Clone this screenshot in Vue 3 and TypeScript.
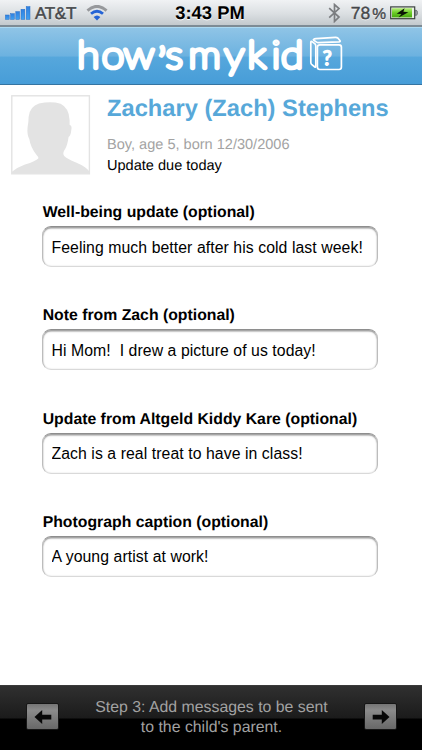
<script setup lang="ts">
import { ref } from 'vue'

interface Field {
  id: string
  label: string
  value: string
}

const fields = ref<Field[]>([
  { id: 'wellbeing', label: 'Well-being update (optional)', value: 'Feeling much better after his cold last week!' },
  { id: 'note', label: 'Note from Zach (optional)', value: 'Hi Mom!  I drew a picture of us today!' },
  { id: 'update', label: 'Update from Altgeld Kiddy Kare (optional)', value: 'Zach is a real treat to have in class!' },
  { id: 'caption', label: 'Photograph caption (optional)', value: 'A young artist at work!' },
])
</script>

<template>
  <div class="screen">
    <div class="status">
      <div class="side">
        <svg class="signal" width="26" height="14" viewBox="0 0 26 14">
          <defs>
            <linearGradient id="bar" x1="0" y1="0" x2="0" y2="1">
              <stop offset="0" stop-color="#2f7fe0" />
              <stop offset="1" stop-color="#3fa0f0" />
            </linearGradient>
          </defs>
          <g fill="url(#bar)" stroke="#2870c8" stroke-width=".5">
            <rect x=".4" y="9" width="3.8" height="4.4" />
            <rect x="5.6" y="7.7" width="3.8" height="5.7" />
            <rect x="10.8" y="5.6" width="3.8" height="7.8" />
            <rect x="16" y="3.3" width="3.8" height="10.1" />
            <rect x="21.2" y=".6" width="3.8" height="12.8" />
          </g>
        </svg>
        <span class="carrier">AT&amp;T</span>
        <svg class="wifi" width="22" height="16" viewBox="0 0 22 16">
          <path d="M1.5 5.6 Q11 -2.8 20.5 5.6" fill="none" stroke="#96989b" stroke-width="3" />
          <path d="M5 8.8 Q11 3.6 17 8.8" fill="none" stroke="#2463d6" stroke-width="2.8" />
          <path d="M7.6 12 Q11 9 14.4 12 L11 15.4 Z" fill="#2463d6" />
        </svg>
      </div>
      <span class="clock">3:43 PM</span>
      <div class="side right">
        <svg class="bluetooth" width="13" height="20" viewBox="0 0 13 20">
          <path d="M1.2 5.2 L11 14 L6.5 18.4 V1.6 L11 5.6 L1.2 14.6" fill="none" stroke="#7b7d80" stroke-width="1.7" />
        </svg>
        <span class="percent">78<i>%</i></span>
        <svg class="battery" width="28" height="14" viewBox="0 0 28 14">
          <defs>
            <linearGradient id="charge" x1="0" y1="0" x2="0" y2="1">
              <stop offset="0" stop-color="#b6ec7c" />
              <stop offset=".45" stop-color="#6fd02a" />
              <stop offset="1" stop-color="#46a80e" />
            </linearGradient>
          </defs>
          <rect x=".7" y=".9" width="24" height="11.8" fill="#e9f0e4" stroke="#3c4340" stroke-width="1.2" />
          <rect x="2" y="2.2" width="20" height="9.2" fill="url(#charge)" />
          <path d="M25.2 4.3 h1 q1.2 0 1.2 2.5 t-1.2 2.5 h-1 Z" fill="#a3a8ab" stroke="#4c5154" stroke-width=".7" />
          <path d="M14.6 2.2 L6.6 7.8 L11.4 8 L8.6 11.6 L18.4 6.2 L13.4 5.8 Z" fill="#0b1606" />
        </svg>
      </div>
    </div>

    <header class="header">
      <svg class="logo" width="270" height="56" viewBox="0 0 270 56">
        <g fill="#fff" stroke="#fff" stroke-linejoin="round" stroke-linecap="round">
          <text transform="scale(1.09 1)" x="0.3 22.6 43 74.4 81.4 102.4 135.2 156.4 178.6 187.2" y="41 41 41 48 41 41 41 41 41 41" class="word">how’smykid</text>
          <text x="245.8" y="38.2" class="mark">?</text>
          <g fill="none" stroke-width="1.7" transform="translate(2.4 1.2)">
            <rect x="238" y="16.7" width="24" height="24.6" rx="2.4" />
            <path d="M235.4 38.8 L232.2 36.2 Q231.4 35.4 231.4 34 V14.4 Q231.4 12.3 233 13.6 L235.6 15.7 Q236.4 16.5 236.4 18 V38 Q236.4 39.5 235.4 38.8Z" />
            <path d="M234.2 11.2 Q235 10.7 236.5 10.5 L256 9.1 Q257.4 9 258.4 9.8 L260.3 12 Q261.6 13.5 259.5 13.7 L239 14.4 Q237.8 14.4 236.8 13.7 L234.4 12 Q233.7 11.5 234.2 11.2Z" />
          </g>
        </g>
      </svg>
    </header>

    <main class="content">
      <section class="profile">
        <svg class="avatar" width="80" height="80" viewBox="0 0 80 80">
          <rect x=".8" y=".8" width="77.6" height="78" fill="#fff" stroke="#e3e3e3" stroke-width="1.4" />
          <path d="M1 78.5 V76.8 Q6 72.5 14 69.6 Q25 66 27.3 63.4 Q27.8 62 25.2 59.5 Q19.5 52 18.3 44 Q15.8 39.5 16.6 32 Q17.6 27 17.6 22 Q18.8 11.4 28 8.6 Q40 6 49.6 8.8 Q58 13 58.6 25 V29.7 Q61.3 30.5 60.3 35 Q59.8 40.5 57.6 42 Q56.4 50 54.4 53.6 Q51 58.5 53.2 61 Q56 64 65 67.4 Q74.5 71.4 78 76 V78.5Z" fill="#e3e3e3" />
        </svg>
        <div class="details">
          <h1>Zachary (Zach) Stephens</h1>
          <p class="meta">Boy, age 5, born 12/30/2006</p>
          <p>Update due today</p>
        </div>
      </section>

      <form class="fields" @submit.prevent>
        <div v-for="field in fields" :key="field.id" class="field">
          <label :for="field.id">{{ field.label }}</label>
          <input :id="field.id" v-model="field.value" type="text" spellcheck="false" autocomplete="off" />
        </div>
      </form>
    </main>

    <footer class="footer">
      <button type="button" aria-label="Back">
        <svg width="18" height="14" viewBox="0 0 18 14">
          <path d="M.5 7 L8.2 0 V4.7 H17.3 V9.5 H8.2 V14 Z" fill="#080808" />
        </svg>
      </button>
      <p>Step 3: Add messages to be sent<br />to the child's parent.</p>
      <button type="button" aria-label="Next">
        <svg width="18" height="14" viewBox="0 0 18 14">
          <path d="M17.5 7 L9.8 0 V4.7 H.7 V9.5 H9.8 V14 Z" fill="#080808" />
        </svg>
      </button>
    </footer>
  </div>
</template>

<style>
body {
  margin: 0;
  background: #fff;
}
</style>

<style scoped>
.screen {
  display: flex;
  flex-direction: column;
  width: 422px;
  height: 750px;
  overflow: hidden;
  background: #fff;
  color: #000;
  font-family: 'Liberation Sans', Arial, sans-serif;
  text-rendering: geometricPrecision;
}

h1,
p {
  margin: 0;
}

.status {
  display: grid;
  grid-template-columns: 1fr auto 1fr;
  align-items: center;
  height: 27px;
  box-sizing: border-box;
  padding: 0 5px;
  border-bottom: 2px solid #7d8b95;
  background: linear-gradient(#f0f2f4, #dbdfe2 55%, #c3c9cd);
  text-shadow: 0 1px 0 #fff;
}

.side {
  display: flex;
  align-items: center;
}

.side.right {
  justify-content: flex-end;
}

.carrier {
  margin: 2px 0 0 4px;
  color: #46484b;
  font-size: 17px;
  letter-spacing: -0.3px;
  -webkit-text-stroke: 0.5px #46484b;
}

.wifi {
  margin-left: 10px;
}

.clock {
  margin: 1px 2px 0 0;
  font-size: 18.4px;
  font-weight: bold;
}

.percent {
  margin: 1px 4px 0 10px;
  color: #46484b;
  font-size: 17.5px;
  -webkit-text-stroke: 0.4px #46484b;
}

.percent i {
  margin-left: 2px;
  font-size: 15.5px;
  font-style: normal;
}

.battery {
  margin-right: -1px;
}

.header {
  display: flex;
  justify-content: center;
  height: 58px;
  box-sizing: border-box;
  border-top: 1px solid #acd9f1;
  border-bottom: 1.5px solid #3574a1;
  background: linear-gradient(#8fc4e6, #6cb2e0 50%, #56a7dc 52%, #479dd8);
}

.logo {
  margin-top: -1px;
  margin-left: 2px;
}

.word {
  font-family: Lato, sans-serif;
  font-size: 37.5px;
  font-weight: 100;
  stroke-width: 4.3px;
}

.mark {
  font-family: Lato, sans-serif;
  font-size: 20px;
  font-weight: 400;
  stroke-width: 1.5px;
}

.content {
  flex: 1;
}

.profile {
  display: flex;
  gap: 16px;
  padding: 10px 0 0 11px;
}

.details {
  font-size: 14.55px;
  line-height: 21px;
}

h1 {
  margin-bottom: 12px;
  color: #57a8d9;
  font-size: 23.7px;
  line-height: 28px;
}

.meta {
  color: #a3a3a3;
}

.fields {
  display: flex;
  flex-direction: column;
  gap: 37.3px;
  padding: 25px 43px 0 42px;
}

.field {
  display: flex;
  flex-direction: column;
  height: 66px;
}

label {
  padding-left: 0.7px;
  height: 24px;
  font-size: 15.8px;
  font-weight: bold;
  line-height: 22px;
}

input {
  width: 336px;
  height: 41px;
  box-sizing: border-box;
  padding: 2px 8px 0 8.5px;
  border: 1px solid;
  border-color: #8e8e8e #bcbcbc #d9d9d9;
  border-radius: 9px;
  outline: none;
  background: #fff;
  box-shadow: inset 0 1.5px 1.5px #9c9c9c, inset 0 0 1.5px #d0d0d0;
  color: #000;
  font: 15.8px 'Liberation Sans', Arial, sans-serif;
  letter-spacing: 0.07px;
}

.footer {
  display: flex;
  align-items: center;
  justify-content: space-between;
  height: 65px;
  box-sizing: border-box;
  padding: 0 25px 0 26px;
  border-top: 1px solid #3a3a3a;
  background: linear-gradient(#303030, #1b1b1b 32px, #000 33px);
}

.footer p {
  color: #a2a2a2;
  font-size: 15.85px;
  line-height: 20px;
  text-align: center;
}

.footer button {
  display: flex;
  align-items: center;
  justify-content: center;
  width: 33px;
  height: 27px;
  margin-bottom: 3px;
  padding: 0;
  border: 1px solid #161616;
  border-radius: 2px;
  background: linear-gradient(#757575, #8b8b8b 25%, #686868);
}
</style>
